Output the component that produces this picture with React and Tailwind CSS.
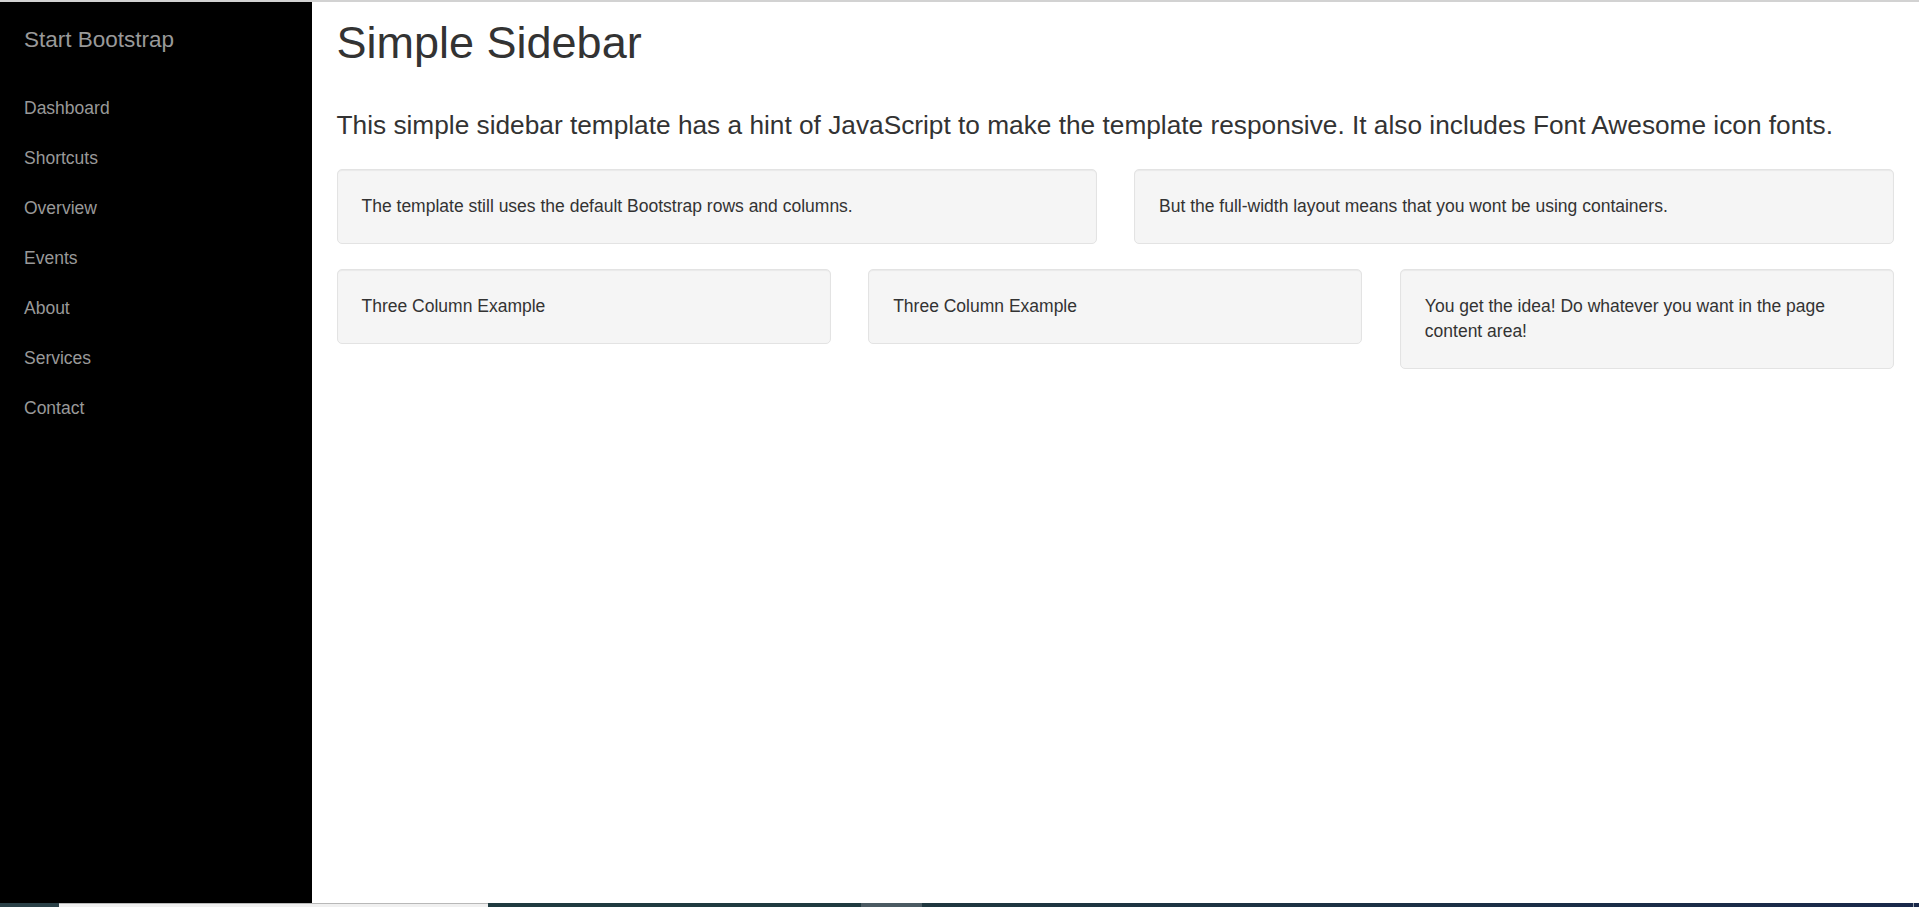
import React from 'react';

const navItems = ['Dashboard', 'Shortcuts', 'Overview', 'Events', 'About', 'Services', 'Contact'];

const Well = ({ children }) => (
  <div className="bg-[#f5f5f5] border border-[#e3e3e3] rounded-[5px] p-[24px] shadow-[inset_0_1px_1px_rgba(0,0,0,0.05)] text-[17.5px] leading-[25px] text-[#333]">
    {children}
  </div>
);

const App = () => {
  return (
    <div className="h-[907px] w-full flex flex-col overflow-hidden bg-white font-['Liberation_Sans',Arial,sans-serif]">
      <div className="h-[2px] bg-[#d2d2d2]" />

      <div className="flex-1 flex min-h-0">
        <aside className="w-[312px] shrink-0 bg-black">
          <ul>
            <li className="h-[81px] leading-[75px] text-[22.5px] pl-[24px] text-[#999]">
              <a href="#">Start Bootstrap</a>
            </li>
            {navItems.map((item) => (
              <li key={item} className="leading-[50px] text-[17.5px] pl-[24px] text-[#999]">
                <a href="#" className="block">{item}</a>
              </li>
            ))}
          </ul>
        </aside>

        <main className="flex-1 pl-[24.5px] pr-[25px] pt-[16px] text-[#333]">
          <h1 className="text-[45px] leading-[1.1] font-normal mb-[39.75px]">Simple Sidebar</h1>
          <p className="text-[26.25px] leading-[1.4] mb-[25px]">
            This simple sidebar template has a hint of JavaScript to make the template responsive. It also includes Font Awesome icon fonts.
          </p>

          <div className="grid grid-cols-2 gap-x-[37.5px] items-start mb-[25px]">
            <Well>The template still uses the default Bootstrap rows and columns.</Well>
            <Well>But the full-width layout means that you wont be using containers.</Well>
          </div>

          <div className="grid grid-cols-3 gap-x-[37.5px] items-start">
            <Well>Three Column Example</Well>
            <Well>Three Column Example</Well>
            <Well>You get the idea! Do whatever you want in the page content area!</Well>
          </div>
        </main>
      </div>

      <div className="h-[4px] flex">
        <div className="w-[59px] bg-[#2a4047]" />
        <div className="w-[429px] bg-[#f0f0f0] border-t border-[#b8b8b8]" />
        <div className="w-[373px] bg-[#1f3a40]" />
        <div className="w-[61px] bg-[#4b5a62]" />
        <div className="flex-1 bg-gradient-to-r from-[#1f373f] to-[#19284a]" />
        <div className="w-[1px] bg-[#9aa3ad]" />
        <div className="w-[5px] bg-[#19284a]" />
      </div>
    </div>
  );
};

export default App;
